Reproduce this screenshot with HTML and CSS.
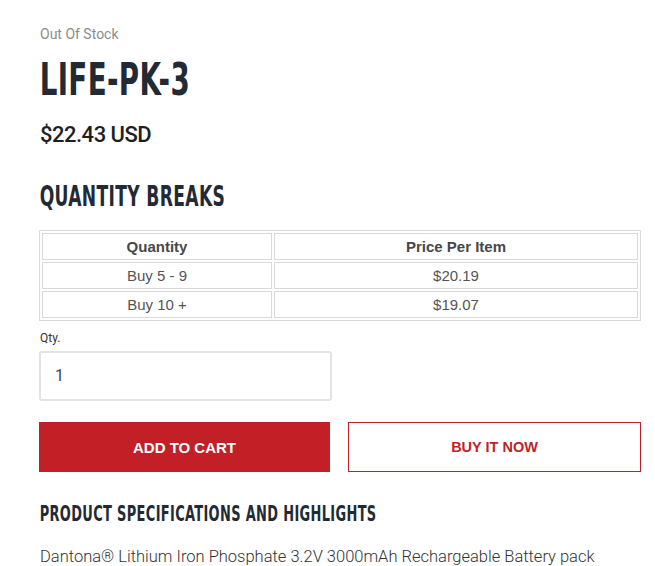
FILE: index.html
```html
<!DOCTYPE html>
<html>
<head>
<meta charset="utf-8">
<link rel="stylesheet" href="styles.css">
</head>
<body>
<div class="product">
  <div class="stock">Out Of Stock</div>
  <h1 class="title">LIFE-PK-3</h1>
  <div class="price">$22.43 USD</div>
  <h2 class="breaks">QUANTITY BREAKS</h2>
  <table class="qtable">
    <tr><th class="c1">Quantity</th><th class="c2">Price Per Item</th></tr>
    <tr><td>Buy 5 - 9</td><td>$20.19</td></tr>
    <tr><td>Buy 10 +</td><td>$19.07</td></tr>
  </table>
  <label class="qty-label">Qty.</label>
  <div class="qty-input">1</div>
  <div class="buttons">
    <div class="btn btn-cart">ADD TO CART</div>
    <div class="btn btn-buy">BUY IT NOW</div>
  </div>
  <h3 class="specs">PRODUCT SPECIFICATIONS AND HIGHLIGHTS</h3>
  <p class="desc">Dantona® Lithium Iron Phosphate 3.2V 3000mAh Rechargeable Battery pack</p>
</div>
</body>
</html>
```
FILE: styles.css
```css
* { box-sizing: border-box; }
html, body { margin: 0; padding: 0; background: #fff; }
body { font-family: "Liberation Sans", Arial, sans-serif; color: #2b2b2b; }
.product { padding: 24px 14px 0 39px; width: 655px; }
.stock { font-family: Roboto, "Liberation Sans", sans-serif; font-size: 14px; color: #8c8c8c; line-height: 20px; padding-left: 1px; }
.title, .breaks, .specs { font-family: "DejaVu Sans Condensed", "DejaVu Sans", sans-serif; font-weight: bold; color: #232a33; transform-origin: left center; }
.title { font-size: 44px; line-height: 48px; margin: 12px 0 0; letter-spacing: 0.5px; padding-left: 1px; transform: scaleX(0.7); }
.price { font-family: Roboto, "Liberation Sans", sans-serif; font-weight: 500; font-size: 22px; color: #1f1f1f; line-height: 26px; margin-top: 18px; padding-left: 1px; letter-spacing: -0.5px; }
.breaks { font-size: 28px; line-height: 32px; margin: 33px 0 0; padding-left: 1px; letter-spacing: 0.5px; transform: scaleX(0.68); }
.qtable { width: 602px; margin-top: 17px; border: 1px solid #d9d9d9; border-spacing: 2px; font-family: "Liberation Sans", Arial, sans-serif; font-size: 15px; }
.qtable th, .qtable td { border: 1px solid #d9d9d9; height: 27px; text-align: center; padding: 0; }
.qtable th { color: #484848; font-weight: bold; }
.qtable td { color: #555; }
.qtable .c1 { width: 230px; }
.qty-label { display: block; font-family: Roboto, "Liberation Sans", sans-serif; font-size: 12px; color: #333; margin-top: 9px; line-height: 16px; padding-left: 1px; }
.qty-input { width: 293px; height: 50px; margin-top: 5px; border: 2px solid #e3e3e3; border-radius: 3px; font-family: Roboto, "Liberation Sans", sans-serif; font-size: 16px; color: #444; padding: 13px 0 0 14px; }
.buttons { display: flex; gap: 18px; margin-top: 21px; width: 602px; }
.btn { flex: 1; height: 50px; display: flex; align-items: center; justify-content: center; font-family: "Liberation Sans", Arial, sans-serif; font-weight: bold; font-size: 15px; }
.btn-cart { background: #c21f26; color: #fff; }
.btn-buy { border: 1px solid #c21f26; color: #c21f26; font-size: 14.5px; }
.specs { font-size: 21px; line-height: 24px; margin: 30px 0 0; padding-left: 1px; letter-spacing: 0.5px; transform: scaleX(0.686); }
.desc { font-family: Roboto, "Liberation Sans", sans-serif; font-weight: 300; font-size: 16.5px; color: #333; margin: 21px 0 0; padding-left: 1px; line-height: 20px; }
```
